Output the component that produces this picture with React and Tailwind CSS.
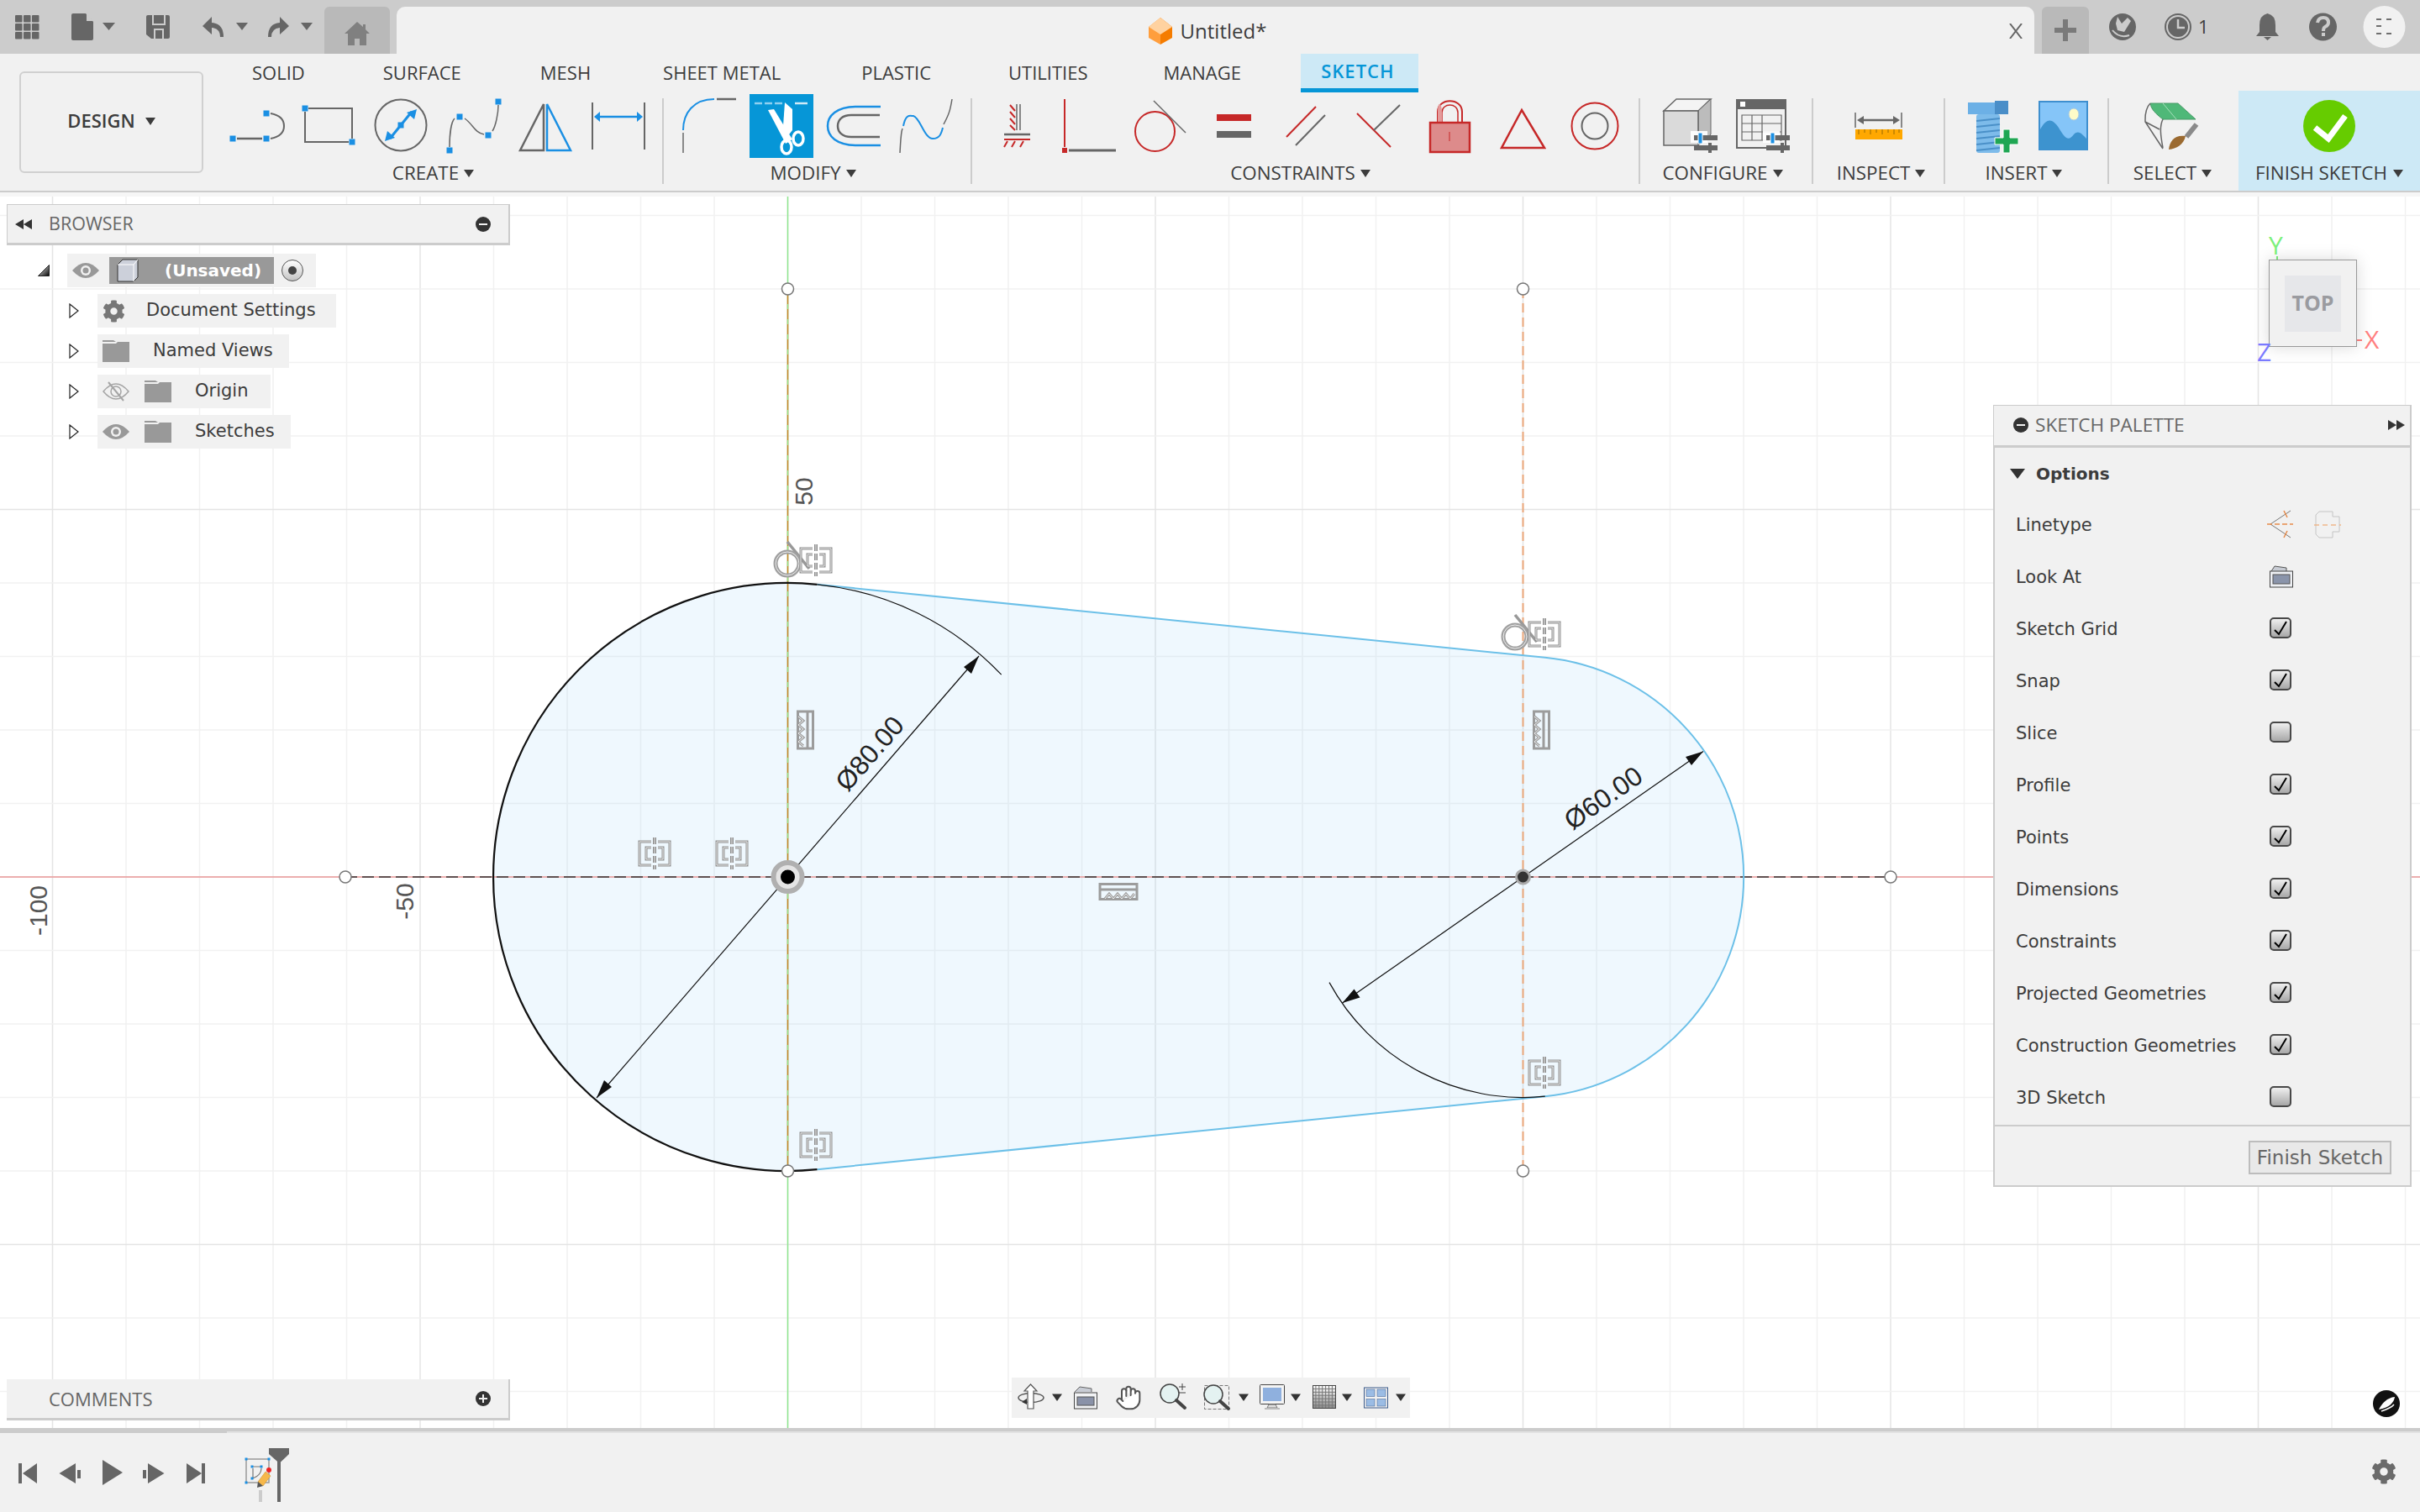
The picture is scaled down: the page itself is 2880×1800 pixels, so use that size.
import React from "react";
import { Hand } from "lucide-react";
import { FaCog } from "react-icons/fa";

const BLUE = "#1a8fe3", GR = "#666666", RED = "#c62828";

const Slot = ({ x, children }) => (
  <svg viewBox={`${x} 112 86 76`} width={86} height={76} className="shrink-0">{children}</svg>
);
const Ico = ({ x, y, w, h, className = "", children }) => (
  <svg viewBox={`${x} ${y} ${w} ${h}`} width={w} height={h} className={`shrink-0 ${className}`}>{children}</svg>
);
const Sq = ({ x, y }) => <rect x={x - 3.5} y={y - 3.5} width={7} height={7} fill={BLUE} />;

const Caret = ({ className = "" }) => (
  <svg width={12} height={10} viewBox="0 0 12 10" className={`shrink-0 ${className}`}><path d="M0 1H12L6 10Z" fill="#3c3c3c" /></svg>
);

const Group = ({ w, pl, label, shift, children }) => (
  <div className={`flex flex-col ${w}`}>
    <div className={`flex h-[76px] mt-[4px] ${pl}`}>{children}</div>
    <div className={`flex h-[36px] items-center justify-center gap-[6px] text-[22.4px] text-[#3c3c3c] ${shift}`}>
      <span>{label}</span><Caret />
    </div>
  </div>
);
const Sep = () => <div className="w-[2px] h-[102px] mt-[9px] bg-[#cccccc] shrink-0" />;

const Slider = ({ x }) => (
  <g>
    <rect x={x - 4} y={156} width={20} height={14} fill="#fff" opacity="0.9" />
    <rect x={x} y={161} width={28} height={6} fill={GR} />
    <rect x={x + 5} y={158} width={5} height={13} fill={BLUE} stroke="#fff" strokeWidth="1" />
    <rect x={x} y={173} width={28} height={6} fill={GR} />
    <rect x={x + 17} y={170} width={4} height={12} fill={GR} />
  </g>
);

const Tab = ({ children, m = "ml-[45px]" }) => (
  <div className={`flex h-[44px] items-center px-[23px] text-[#3c3c3c] ${m}`}>{children}</div>
);

function TopBar() {
  return (
    <div className="flex h-[64px] bg-[#cccccc] shrink-0">
      <Ico x={0} y={0} w={70} h={64}>
        {[18, 28, 38].map(x => [18, 28, 38].map(y => <rect key={`${x}${y}`} x={x} y={y} width={8.5} height={8.5} rx={1} fill={GR} />))}
      </Ico>
      <Ico x={70} y={0} w={80} h={64}>
        <path d="M87 16H102L111 26V46Q111 48 109 48H87Q85 48 85 46V18Q85 16 87 16Z" fill={GR} />
        <path d="M103 16L111 25H103Z" fill="#ccc" />
        <path d="M122 27H137L129.500 36Z" fill={GR} />
      </Ico>
      <Ico x={150} y={0} w={76} h={64}>
        <path d="M176 18H200Q202 18 202 20V44Q202 46 200 46H180L174 41V20Q174 18 176 18Z" fill={GR} />
        <path d="M182 18V29H196V18" fill="none" stroke="#ccc" strokeWidth="2" />
        <path d="M184 46V35H194V46" fill="none" stroke="#ccc" strokeWidth="2" />
      </Ico>
      <Ico x={226} y={0} w={78} h={64}>
        <path d="M241 31L252 20V27Q266 28 266 44H262Q262 34 252 33V41Z" fill={GR} />
        <path d="M281 27H295L288 36Z" fill={GR} />
      </Ico>
      <Ico x={304} y={0} w={82} h={64}>
        <path d="M344 31L333 20V27Q319 28 319 44H323Q323 34 333 33V41Z" fill={GR} />
        <path d="M358 27H372L365 36Z" fill={GR} />
      </Ico>
      <div className="flex w-[78px] h-[56px] mt-[8px] rounded-t-[6px] bg-[#b9b9b9] items-end justify-center shrink-0">
        <svg viewBox="0 0 30 28" width={30} height={28} className="mb-[10px]">
          <path d="M15 0L22 6V3H25V9L30 14H26V28H18V20H12V28H4V14H0Z" fill="#808080" />
        </svg>
      </div>
      <div className="relative flex h-[56px] mt-[8px] ml-[8px] w-[1949px] rounded-t-[10px] bg-[#f1f1f1] items-center justify-center pr-[20px] pt-[2px] shrink-0">
        <svg viewBox="0 0 30 34" width={30} height={34} className="mr-[9px]">
          <path d="M15 1L29 12V25L15 33Z" fill="#f57c00" />
          <path d="M15 1L1 12V25L15 33Z" fill="#ff9e3d" />
          <path d="M15 1L29 12L15 21L1 12Z" fill="#ffd2a0" />
        </svg>
        <span className="text-[24px] text-[#3c3c3c]">Untitled*</span>
        <svg viewBox="0 0 16 18" width={16} height={18} className="absolute right-[14px] top-[20px]">
          <path d="M1 0L15 18M15 0L1 18" stroke="#666" strokeWidth="2" />
        </svg>
      </div>
      <div className="flex w-[56px] h-[56px] mt-[8px] ml-[9px] rounded-t-[6px] bg-[#b9b9b9] items-center justify-center shrink-0">
        <svg width={26} height={26} viewBox="0 0 26 26"><path d="M10 0H16V10H26V16H16V26H10V16H0V10H10Z" fill="#7a7a7a" /></svg>
      </div>
      <Ico x={2486} y={0} w={74} h={64}>
        <circle cx={2526} cy={32} r={16} fill={GR} />
        <path d="M2520 20L2525 28L2532 21L2536 25L2528 38L2520 36L2518 28Z" fill="#ccc" />
        <path d="M2514 36Q2522 46 2534 42" stroke="#ccc" strokeWidth="2" fill="none" />
      </Ico>
      <Ico x={2560} y={0} w={90} h={64}>
        <circle cx={2592} cy={32} r={15} fill="none" stroke={GR} strokeWidth="2" />
        <circle cx={2592} cy={32} r={12} fill={GR} />
        <path d="M2592 23V33H2600" stroke="#ccc" strokeWidth="2.500" fill="none" />
        <text x={2616} y={40} fontSize={22} fill="#3c3c3c" fontFamily="Open Sans, sans-serif">1</text>
      </Ico>
      <Ico x={2650} y={0} w={80} h={64}>
        <path d="M2698.500 16Q2708 18 2708 30V38L2712 43H2685L2689 38V30Q2689 18 2698.500 16Z" fill={GR} />
        <path d="M2694 44H2703L2698.500 48Z" fill={GR} />
      </Ico>
      <Ico x={2730} y={0} w={70} h={64}>
        <circle cx={2764.500} cy={32} r={16.500} fill={GR} />
        <path d="M2758 27Q2759 21 2765 21Q2771 21 2771 27Q2771 30 2767 32Q2765 33 2765 37" stroke="#ccc" strokeWidth="4" fill="none" />
        <rect x={2763} y={39} width={4} height={4} fill="#ccc" />
      </Ico>
      <Ico x={2800} y={0} w={80} h={64}>
        <circle cx={2837.500} cy={32} r={25} fill="#f1f1f1" />
        <path d="M2828 23H2834M2840 23H2846M2828 31H2834M2828 40H2834M2840 40H2846" stroke="#444" strokeWidth="1.500" />
      </Ico>
    </div>
  );
}

function Ribbon() {
  return (
    <div className="flex h-[165px] bg-[#f1f1f1] border-b-[2px] border-[#cccccc] shrink-0">
      <div className="w-[253px] shrink-0 pl-[23px] pt-[21px]">
        <div className="flex w-[219px] h-[121px] pb-[4px] rounded-[6px] border-2 border-[#d0d0d0] items-center justify-center gap-[12px] text-[22px] font-semibold text-[#3c3c3c]">
          <span>DESIGN</span><Caret />
        </div>
      </div>
      <div className="flex flex-col flex-1">
        <div className="flex h-[44px] pl-[24px] text-[22px]">
          <Tab m="ml-0">SOLID</Tab>
          <Tab m="ml-[47px]">SURFACE</Tab>
          <Tab m="ml-[48px]">MESH</Tab>
          <Tab m="ml-[40px]">SHEET METAL</Tab>
          <Tab m="ml-[50px]">PLASTIC</Tab>
          <Tab m="ml-[46px]">UTILITIES</Tab>
          <Tab m="ml-[44px]">MANAGE</Tab>
          <div className="flex h-[46px] w-[140px] items-center justify-center pr-[4px] ml-[48px] bg-[#cde9f6] border-b-[5px] border-[#0696d7] text-[#0696d7] font-semibold tracking-[1px]">SKETCH</div>
        </div>
        <div className="flex flex-1">
          <Group w="w-[535px]" pl="pl-[10px]" label="CREATE" shift="pr-[10px]">
            <Slot x={263}>
              <path d="M282 165H312" stroke={GR} strokeWidth="2.500" />
              <path d="M322 135Q338 138 338 150Q338 162 322 165" stroke={GR} strokeWidth="2" fill="none" />
              <Sq x={277} y={165} /><Sq x={317} y={165} /><Sq x={317} y={135} />
            </Slot>
            <Slot x={349}>
              <path d="M367 129H419V165M415 169H363V133" stroke={GR} strokeWidth="2" fill="none" />
              <Sq x={363} y={129} /><Sq x={419} y={169} />
            </Slot>
            <Slot x={435}>
              <circle cx={477} cy={149} r={30.500} fill="none" stroke={GR} strokeWidth="2" />
              <path d="M464 165L490 133" stroke={BLUE} strokeWidth="3" />
              <path d="M496 130L484 134L493 142Z" fill={BLUE} /><path d="M458 168L470 164L461 156Z" fill={BLUE} />
              <Sq x={477} y={149} />
            </Slot>
            <Slot x={521}>
              <path d="M535 175C535 160 537 145 541 141M553 141C563 148 565 158 576 160M586 156C590 150 593 135 593 125" stroke={GR} strokeWidth="1.500" fill="none" />
              <Sq x={535} y={179} /><Sq x={547} y={139} /><Sq x={581} y={161} /><Sq x={593} y={121} />
            </Slot>
            <Slot x={607}>
              <path d="M619 179L647 124V179Z" stroke={GR} strokeWidth="2.500" fill="none" />
              <path d="M651 179V124L679 179Z" stroke={BLUE} strokeWidth="2.500" fill="none" />
            </Slot>
            <Slot x={693}>
              <path d="M705 122V178M767 122V178" stroke={GR} strokeWidth="2" />
              <path d="M712 139H760" stroke={BLUE} strokeWidth="2.500" />
              <path d="M707 139L714 133V145Z M765 139L758 133V145Z" fill={BLUE} />
            </Slot>
          </Group>
          <Sep />
          <Group w="w-[365px]" pl="pl-[11px]" label="MODIFY" shift="pr-[10px]">
            <Slot x={801}>
              <path d="M813 155C813 135 825 118 850 118" stroke={BLUE} strokeWidth="2" fill="none" />
              <path d="M853 118H876" stroke={GR} strokeWidth="2.500" />
              <path d="M813 158V182" stroke={GR} strokeWidth="1.500" />
            </Slot>
            <Slot x={887}>
              <rect x={892} y={112} width={76} height={76} fill="#0696d7" />
              <path d="M898 123H931" stroke="#8fd0f0" strokeWidth="2.500" strokeDasharray="9 3" />
              <path d="M946 123H961" stroke="#cfeaf7" strokeWidth="2.500" />
              <path d="M914 131L921 130L943 166L935 171Z" fill="#fff" />
              <path d="M934 122L943 130V155L936 164L932 150Z" fill="#fff" />
              <ellipse cx={936} cy={175} rx={6} ry={8} fill="none" stroke="#fff" strokeWidth="3.500" />
              <ellipse cx={950} cy={165} rx={6} ry={8} fill="none" stroke="#fff" strokeWidth="3.500" />
            </Slot>
            <Slot x={973}>
              <path d="M1048 127H1020C995 127 985 138 985 150C985 162 995 173 1020 173H1048" stroke={BLUE} strokeWidth="2.500" fill="none" />
              <path d="M1047 137H1013C1002 137 997 143 997 150C997 157 1002 163 1013 163H1047" stroke={GR} strokeWidth="2.500" fill="none" />
            </Slot>
            <Slot x={1059}>
              <path d="M1071 182C1072 165 1072 158 1074 153M1123 148C1130 135 1131 130 1133 118" stroke={GR} strokeWidth="1.500" fill="none" />
              <path d="M1075 150C1078 135 1083 138 1087 138C1095 140 1100 165 1110 165C1118 165 1120 160 1122 152" stroke={BLUE} strokeWidth="2" fill="none" />
            </Slot>
          </Group>
          <Sep />
          <Group w="w-[793px]" pl="pl-[10px]" label="CONSTRAINTS" shift="pr-[12px]">
            <Slot x={1167}>
              <path d="M1210 124V155M1214 124V155" stroke={GR} strokeWidth="1.500" />
              <path d="M1202 125L1208 132M1202 133L1208 140M1202 141L1208 148M1202 149L1208 155" stroke={RED} strokeWidth="2" />
              <path d="M1195 160H1226" stroke={GR} strokeWidth="2.500" />
              <path d="M1195 166H1226" stroke={RED} strokeWidth="2" />
              <path d="M1199 168L1195 175M1208 168L1204 175M1218 168L1214 175" stroke={RED} strokeWidth="2" />
            </Slot>
            <Slot x={1253}>
              <path d="M1267 118V175" stroke={RED} strokeWidth="2" />
              <rect x={1264} y={176} width={6} height={6} fill={RED} />
              <path d="M1272 179H1328" stroke={GR} strokeWidth="3" />
            </Slot>
            <Slot x={1339}>
              <circle cx={1374.500} cy={156.500} r={23.500} fill="none" stroke={RED} strokeWidth="2" />
              <path d="M1373 120L1411 158" stroke={GR} strokeWidth="1.500" />
            </Slot>
            <Slot x={1425}>
              <rect x={1448} y={136} width={41} height={8} fill={RED} />
              <rect x={1448} y={156} width={41} height={8} fill={GR} />
            </Slot>
            <Slot x={1511}>
              <path d="M1531 163L1566 127" stroke={RED} strokeWidth="2" />
              <path d="M1542 173L1577 137" stroke={GR} strokeWidth="2" />
            </Slot>
            <Slot x={1597}>
              <path d="M1615 135L1655 175" stroke={RED} strokeWidth="2" />
              <path d="M1666 125L1635 155" stroke={GR} strokeWidth="2" />
            </Slot>
            <Slot x={1683}>
              <path d="M1711 145V133C1711 116 1740 116 1740 133V145" stroke={RED} strokeWidth="2" fill="none" />
              <path d="M1716 145V134C1716 122 1735 122 1735 134V145" stroke={RED} strokeWidth="1.500" fill="none" />
              <path d="M1711 145V133C1711 119 1716 122 1716 134V145" fill="#e49a9a" />
              <rect x={1702} y={146} width={47} height={35} fill="#dd8b8b" stroke={RED} strokeWidth="2.500" />
              <path d="M1725 157V168" stroke={RED} strokeWidth="1" />
            </Slot>
            <Slot x={1769}>
              <path d="M1811 131L1787 176H1838Z" fill="none" stroke={RED} strokeWidth="2.500" />
            </Slot>
            <Slot x={1855}>
              <circle cx={1898} cy={150} r={27.500} fill="none" stroke={RED} strokeWidth="2" />
              <circle cx={1898} cy={150} r={15.500} fill="none" stroke={GR} strokeWidth="2" />
            </Slot>
          </Group>
          <Sep />
          <Group w="w-[204px]" pl="pl-[13px]" label="CONFIGURE" shift="pr-[8px]">
            <Slot x={1965}>
              <path d="M1980 132L1995 118H2036L2021 132Z" fill="#f4f4f4" stroke={GR} strokeWidth="1.500" />
              <path d="M2021 132L2036 118V160L2021 173Z" fill="#bcbcbc" stroke={GR} strokeWidth="1" />
              <path d="M1980 132H2021V173H1980Z" fill="#dadada" stroke={GR} strokeWidth="1.500" />
              <Slider x={2016} />
            </Slot>
            <Slot x={2051}>
              <rect x={2067} y={119} width={58} height={57} fill="none" stroke={GR} strokeWidth="2" />
              <rect x={2066} y={118} width={60} height={12} fill={GR} />
              <rect x={2071} y={121} width={6} height={6} fill="#fff" />
              <path d="M2073 137H2120V167H2073ZM2073 147H2120M2073 157H2120M2085 137V167M2097 137V167" fill="none" stroke={GR} strokeWidth="1.200" />
              <Slider x={2102} />
            </Slot>
          </Group>
          <Sep />
          <Group w="w-[155px]" pl="pl-[35px]" label="INSPECT" shift="pl-[6px]">
            <Slot x={2193}>
              <path d="M2208 134V152M2263 134V152" stroke={GR} strokeWidth="1.500" />
              <path d="M2214 143H2257" stroke={GR} strokeWidth="2.500" />
              <path d="M2210 143L2218 138V148ZM2261 143L2253 138V148Z" fill={GR} />
              <rect x={2208} y={154} width={56} height={12} fill="#ffa800" />
              <path d="M2212 154V160M2219 154V158M2226 154V160M2233 154V158M2240 154V160M2247 154V158M2254 154V160M2260 154V158" stroke="#9a6a00" strokeWidth="1" />
            </Slot>
          </Group>
          <Sep />
          <Group w="w-[193px]" pl="pl-[14px]" label="INSERT" shift="pr-[6px]">
            <Slot x={2329}>
              <path d="M2342 122H2390V136H2342Z" fill="#6cb0e6" />
              <path d="M2374 120H2390V136H2374Z" fill="#4a8ec8" />
              <rect x={2352} y={136} width={28} height={46} rx={3} fill="#7dbbea" />
              <path d="M2352 144L2380 141M2352 151L2380 148M2352 158L2380 155M2352 165L2380 162M2352 172L2380 169M2352 179L2380 176" stroke="#4a90c8" strokeWidth="2" />
              <path d="M2384 154H2392V164H2402V172H2392V182H2384V172H2374V164H2384Z" fill="#1fa653" stroke="#fff" strokeWidth="1" />
            </Slot>
            <Slot x={2415}>
              <rect x={2427} y={121} width={57} height={57} fill="#85c5f8" stroke="#3e8fcf" strokeWidth="2" />
              <ellipse cx={2468} cy={136} rx={6} ry={7} fill="#fdfbc8" stroke="#a8c8e0" strokeWidth="1" />
              <path d="M2427 178V156C2435 140 2442 140 2450 152C2458 166 2462 168 2468 160C2474 154 2478 160 2484 166V178Z" fill="#3d93cf" />
            </Slot>
          </Group>
          <Sep />
          <Group w="w-[154px]" pl="pl-[31px]" label="SELECT" shift="pr-[3px]">
            <Slot x={2541}>
              <path d="M2559 123H2592L2613 142H2574C2565 135 2560 130 2559 123Z" fill="#4fb878" stroke="#4a9a68" strokeWidth="1" />
              <path d="M2574 123L2590 142" stroke="#a8e0bc" strokeWidth="1" />
              <path d="M2559 123C2552 130 2553 140 2553 145L2574 177M2574 142C2570 150 2571 160 2574 176M2553 145L2570 154" stroke={GR} strokeWidth="1.500" fill="none" />
              <path d="M2614 148L2602 163" stroke="#8a8a8a" strokeWidth="6" />
              <path d="M2581 178C2582 168 2588 160 2601 162C2599 172 2590 177 2581 178Z" fill="#9b6a30" />
            </Slot>
          </Group>
          <div className="flex flex-col w-[216px] bg-[#cde9f6]">
            <div className="flex h-[76px] mt-[4px] pl-[65px]">
              <Slot x={2729}>
                <circle cx={2772} cy={150} r={31} fill="#66cc00" />
                <path d="M2755 152L2771 165L2791 138" fill="none" stroke="#fff" strokeWidth="7" />
              </Slot>
            </div>
            <div className="flex h-[36px] items-center justify-center gap-[7px] text-[22.4px] text-[#3c3c3c]">
              <span>FINISH SKETCH</span><Caret />
            </div>
          </div>
        </div>
      </div>
    </div>
  );
}

const Mid = ({ x, y }) => {
  const d = "M-4 -14H-18V14H-4M4 -14H18V14H4M-4 -7H-10V7H-4M4 -7H10V7H4";
  return (
    <g transform={`translate(${x} ${y})`} fill="none">
      <g stroke="#8f8f8f" strokeWidth="3">
        <path d={d} />
        <path d="M0 -19V19" strokeDasharray="8 3" strokeWidth="4" />
      </g>
      <g stroke="#e8e8e8" strokeWidth="1">
        <path d={d} />
        <path d="M0 -19V19" strokeDasharray="8 3" />
      </g>
    </g>
  );
};
const Tan = ({ x, y }) => (
  <g fill="none">
    <path d={`M${x} ${y - 26}L${x + 26} ${y + 6}`} stroke="#999" strokeWidth="3.500" />
    <circle cx={x} cy={y} r={14} stroke="#a0a0a0" strokeWidth="5" />
    <circle cx={x} cy={y} r={14} stroke="#eee" strokeWidth="1" />
  </g>
);
const FixV = ({ x, y }) => (
  <g transform={`translate(${x} ${y})`} fill="none">
    <g stroke="#9c9c9c" strokeWidth="3">
      <rect x={-8.500} y={-22} width={18} height={44} />
      <path d="M3 -22V22" />
      <path d="M-8 -16L-2 -11L-8 -6L-2 -1L-8 4L-2 9L-8 14L-2 19" />
    </g>
    <path d="M-8 -16L-2 -11L-8 -6L-2 -1L-8 4L-2 9L-8 14L-2 19" stroke="#eee" strokeWidth="1" />
  </g>
);
const Pt = ({ x, y }) => <circle cx={x} cy={y} r={7} fill="#fff" stroke="#777" strokeWidth="1.500" />;

function Drawing() {
  const minorX = [], minorY = [];
  for (let k = -11; k <= 23; k++) minorX.push(937.5 + 87.5 * k);
  for (let k = -10; k <= 8; k++) minorY.push(1044 + 87.5 * k);
  return (
    <svg viewBox="0 229 2880 1471" width={2880} height={1471} className="absolute inset-0">
      {minorX.map((x, i) => (
        <path key={x} d={`M${x} 234V1700`} stroke={(i - 1) % 5 === 0 ? "#e4e4e4" : "#f1f1f1"} strokeWidth="1.500" />
      ))}
      {minorY.map((y, i) => (
        <path key={y} d={`M0 ${y}H2880`} stroke={i % 5 === 0 ? "#e4e4e4" : "#f1f1f1"} strokeWidth="1.500" />
      ))}
      <rect x={0} y={229} width={2880} height={5} fill="#f6f6f6" />
      <path d="M972.500 695.800L1838.750 782.800A262.500 262.500 0 0 1 1838.750 1305.200L972.500 1392.200A350 350 0 1 1 972.500 695.800Z" fill="#8fd0f7" fillOpacity="0.14" />
      <path d="M0 1044H2880" stroke="#ec9a9a" strokeWidth="1.500" />
      <path d="M937.500 234V1700" stroke="#8ee68e" strokeWidth="1.500" />
      <path d="M937.500 344V1394" stroke="#c9832a" strokeWidth="1.500" />
      <path d="M937.500 344V1394" stroke="#8ee68e" strokeWidth="1" strokeDasharray="6 12" />
      <path d="M1812.500 344V1394" stroke="#eba77a" strokeWidth="2" strokeDasharray="11 6" />
      <path d="M411 1044H2250" stroke="#333" strokeWidth="1.500" strokeDasharray="14 6" />

      <path d="M972.500 695.800L1838.750 782.800A262.500 262.500 0 0 1 1838.750 1305.200L972.500 1392.200" fill="none" stroke="#6cc0e8" strokeWidth="2" />
      <path d="M972.500 1392.200A350 350 0 1 1 972.500 695.800" fill="none" stroke="#111" strokeWidth="2.200" />
      <path d="M972.500 695.800A350 350 0 0 1 1191.700 803.200" fill="none" stroke="#111" strokeWidth="1.200" />
      <path d="M1582 1169.600A262.500 262.500 0 0 0 1838.750 1305.200" fill="none" stroke="#111" strokeWidth="1.200" />

      <path d="M1165 781L710 1307" stroke="#111" strokeWidth="1.200" />
      <path d="M1165 781L1147 794L1156 802Z M710 1307L728 1294L719 1286Z" fill="#111" />
      <path d="M2027 894.600L1597.500 1194" stroke="#111" strokeWidth="1.200" />
      <path d="M2027 894.600L2006 901L2013 911Z M1597.500 1194L1618.500 1187.600L1611.500 1177.600Z" fill="#111" />
      <text x={1035} y={908} transform="rotate(-49 1035 897)" fontSize={32} textAnchor="middle" fill="#222" fontFamily="Liberation Sans, sans-serif">Ø80.00</text>
      <text x={1908} y={961} transform="rotate(-35 1908 950)" fontSize={32} textAnchor="middle" fill="#222" fontFamily="Liberation Sans, sans-serif">Ø60.00</text>
      <text x={967} y={585} transform="rotate(-90 967 585)" fontSize={30} textAnchor="middle" fill="#555" fontFamily="Liberation Sans, sans-serif">50</text>
      <text x={492} y={1073} transform="rotate(-90 492 1073)" fontSize={30} textAnchor="middle" fill="#555" fontFamily="Liberation Sans, sans-serif">-50</text>
      <text x={56} y={1084} transform="rotate(-90 56 1084)" fontSize={30} textAnchor="middle" fill="#555" fontFamily="Liberation Sans, sans-serif">-100</text>

      <Pt x={411} y={1044} /><Pt x={2250} y={1044} /><Pt x={937.5} y={344} /><Pt x={1812.5} y={344} /><Pt x={937.5} y={1394} /><Pt x={1812.5} y={1394} />
      <circle cx={937.5} cy={1044} r={17} fill="#e4e4e4" stroke="#b0b0b0" strokeWidth="6" />
      <circle cx={937.5} cy={1044} r={8.500} fill="#000" />
      <circle cx={1812.5} cy={1044} r={8} fill="#333" stroke="#aaa" strokeWidth="3" />

      <Mid x={779} y={1016} /><Mid x={871} y={1016} />
      <Tan x={937} y={671} /><Tan x={1803} y={758} />
      <Mid x={971} y={667} /><Mid x={1838} y={755} /><Mid x={1838} y={1277} /><Mid x={971} y={1363} />
      <FixV x={958} y={869} /><FixV x={1834} y={869} />
      <g transform="rotate(-90 1331 1062)"><FixV x={1331} y={1062} /></g>

      <circle cx={2840} cy={1671} r={16} fill="#111" />
      <path d="M2831 1678C2835 1670 2841 1664 2850 1663C2849 1670 2843 1676 2831 1678Z" fill="#fff" />
      <path d="M2834 1680C2840 1678 2846 1676 2849 1672" stroke="#fff" strokeWidth="1.500" fill="none" />
    </svg>
  );
}

const Eye = ({ off }) => (
  <svg viewBox="0 0 32 24" width={32} height={24} className="shrink-0">
    {off ? (
      <g fill="none" stroke="#a5a5a5" strokeWidth="1.500">
        <path d="M1 12Q16 -6 31 12Q16 30 1 12Z" /><circle cx={16} cy={12} r={6} /><path d="M7 1L25 23" strokeWidth="2" />
      </g>
    ) : (
      <g>
        <path d="M0 12Q16 -6 32 12Q16 30 0 12Z" fill="#999" />
        <circle cx={16} cy={12} r={6} fill="#f1f1f1" /><circle cx={16} cy={12} r={3.500} fill="#999" />
      </g>
    )}
  </svg>
);
const Folder = ({ className = "" }) => (
  <svg viewBox="0 0 32 26" width={32} height={26} className={`shrink-0 ${className}`}>
    <path d="M0 0H13L16 2H0Z M0 4H16L18 2H32V26H0Z" fill="#999" />
  </svg>
);
const Tri = () => (
  <svg viewBox="0 0 12 18" width={12} height={18} className="shrink-0">
    <path d="M1 1L11 9L1 17Z" fill="#fff" stroke="#222" strokeWidth="1.200" />
  </svg>
);

function BrowserPanel() {
  const label = "text-[21px] text-[#3c3c3c] font-['DejaVu_Sans',sans-serif]";
  return (
    <div className="absolute left-[8px] top-[14px] w-[599px]">
      <div className="flex h-[49px] items-center bg-[#f1f1f1] border border-[#cccccc] border-b-[3px] border-r-[2px]">
        <svg viewBox="0 0 20 12" width={20} height={12} className="ml-[9px]"><path d="M0 6L10 0V12ZM10 6L20 0V12Z" fill="#333" /></svg>
        <span className="ml-[20px] text-[21.5px] text-[#666666]">BROWSER</span>
        <div className="relative ml-auto mr-[21px] w-[18px] h-[18px] rounded-full bg-[#333]">
          <div className="absolute left-[4px] top-[8px] w-[10px] h-[2px] bg-[#f1f1f1]" />
        </div>
      </div>
      <div className="flex flex-col gap-[8px] mt-[10px]">
        <div className="flex items-center h-[40px] pl-[37px]">
          <svg viewBox="0 0 14 14" width={14} height={14} className="shrink-0">
            <defs><linearGradient id="tg" x1="0" x2="1" y1="0" y2="1"><stop offset="0" stopColor="#fff" /><stop offset="1" stopColor="#000" /></linearGradient></defs>
            <path d="M0.500 13.500L13.500 0.500V13.500Z" fill="url(#tg)" stroke="#222" />
          </svg>
          <div className="flex items-center w-[296px] h-[40px] ml-[21px] pl-[6px] bg-[#f1f1f1]">
            <Eye />
            <div className="flex items-center w-[196px] h-[32px] ml-[12px] pl-[9px] bg-[#999999]">
              <svg viewBox="0 0 26 28" width={26} height={28} className="shrink-0">
                <path d="M1 7L7 1H25V22L20 27H1Z" fill="#ccd0da" stroke="#333" />
                <path d="M1 7H20V27M20 7L25 1" fill="none" stroke="#fff" />
              </svg>
              <span className="ml-[31px] text-[20px] font-bold text-white font-['DejaVu_Sans',sans-serif] whitespace-nowrap">(Unsaved)</span>
            </div>
            <div className="flex items-center justify-center w-[26px] h-[26px] ml-[9px] rounded-full border border-[#555] bg-linear-to-b from-[#ffffff] to-[#c4c4c4]">
              <div className="w-[10px] h-[10px] rounded-full bg-[#444]" />
            </div>
          </div>
        </div>
        <div className="flex items-center h-[40px] pl-[74px]">
          <Tri />
          <div className="flex items-center w-[284px] h-[40px] ml-[22px] pl-[6px] bg-[#f1f1f1]">
            <FaCog size={27} color="#777" className="shrink-0" />
            <span className={`ml-[25px] ${label}`}>Document Settings</span>
          </div>
        </div>
        <div className="flex items-center h-[40px] pl-[74px]">
          <Tri />
          <div className="flex items-center w-[228px] h-[40px] ml-[22px] pl-[6px] bg-[#f1f1f1]">
            <Folder />
            <span className={`ml-[28px] ${label}`}>Named Views</span>
          </div>
        </div>
        <div className="flex items-center h-[40px] pl-[74px]">
          <Tri />
          <div className="flex items-center w-[206px] h-[40px] ml-[22px] pl-[6px] bg-[#f1f1f1]">
            <Eye off /><Folder className="ml-[18px]" />
            <span className={`ml-[28px] ${label}`}>Origin</span>
          </div>
        </div>
        <div className="flex items-center h-[40px] pl-[74px]">
          <Tri />
          <div className="flex items-center w-[230px] h-[40px] ml-[22px] pl-[6px] bg-[#f1f1f1]">
            <Eye /><Folder className="ml-[18px]" />
            <span className={`ml-[28px] ${label}`}>Sketches</span>
          </div>
        </div>
      </div>
    </div>
  );
}

const Check = ({ on }) => (
  <div className="relative w-[26px] h-[25px] -mt-[6px] rounded-[5px] border-2 border-[#484848] bg-linear-to-b from-[#f0f0f0] to-[#a8a8a8]">
    {on && (
      <svg viewBox="0 0 22 21" width={22} height={21} className="absolute inset-0">
        <path d="M4 13L9 18L18 3" fill="none" stroke="#000" strokeWidth="2" />
      </svg>
    )}
  </div>
);
const PRow = ({ label, children }) => (
  <div className="flex h-[62px] items-center">
    <span className="w-[327px] pl-[25px] text-[21px] text-[#3c3c3c] font-['DejaVu_Sans',sans-serif] whitespace-nowrap">{label}</span>
    {children}
  </div>
);

function Palette() {
  return (
    <div className="absolute left-[2372px] top-[253px] w-[498px]">
      <div className="flex h-[51px] pb-[2px] items-center bg-[#f1f1f1] border border-[#cccccc] border-b-[3px] border-r-[2px]">
        <div className="relative ml-[23px] w-[18px] h-[18px] rounded-full bg-[#333]">
          <div className="absolute left-[4px] top-[8px] w-[10px] h-[2px] bg-[#f1f1f1]" />
        </div>
        <span className="ml-[8px] text-[22.6px] text-[#666666]">SKETCH PALETTE</span>
        <svg viewBox="0 0 20 12" width={20} height={12} className="ml-auto mr-[6px]"><path d="M20 6L10 0V12ZM10 6L0 0V12Z" fill="#333" /></svg>
      </div>
      <div className="bg-[#f1f1f1] border-x-2 border-[#cccccc]">
        <div className="flex h-[62px] items-center">
          <svg viewBox="0 0 18 12" width={18} height={12} className="ml-[18px]"><path d="M0 0H18L9 12Z" fill="#333" /></svg>
          <span className="ml-[13px] text-[20px] font-bold text-[#3c3c3c] font-['DejaVu_Sans',sans-serif]">Options</span>
        </div>
        <PRow label="Linetype">
          <svg viewBox="2696 606 92 36" width={92} height={36} className="-ml-[5px] -mt-[4px]">
            <path d="M2726 608L2702 624L2726 640" fill="none" stroke="#777" strokeWidth="1" />
            <path d="M2698 624H2729" stroke="#e68a4a" strokeWidth="1.500" strokeDasharray="6 3" />
            <path d="M2718 608L2722 616M2722 632L2718 640" stroke="#e68a4a" strokeWidth="1.500" />
            <path d="M2760 609H2776V615H2784V633H2776V640H2760L2756 636V613Z" fill="none" stroke="#c4c4c4" strokeWidth="1" />
            <path d="M2754 625H2786" stroke="#f0b68a" strokeWidth="1.500" strokeDasharray="6 4" />
          </svg>
        </PRow>
        <PRow label="Look At">
          <svg viewBox="0 0 28 28" width={28} height={28} className="-mt-[4px]">
            <path d="M2 8L6 2L20 4V8" fill="#c8ccd4" stroke="#555" />
            <rect x={0.500} y={8} width={27} height={19} fill="#eef0f4" stroke="#444" />
            <rect x={4} y={12} width={20} height={11} fill="#8a94aa" stroke="#555" />
          </svg>
        </PRow>
        <PRow label="Sketch Grid"><Check on /></PRow>
        <PRow label="Snap"><Check on /></PRow>
        <PRow label="Slice"><Check /></PRow>
        <PRow label="Profile"><Check on /></PRow>
        <PRow label="Points"><Check on /></PRow>
        <PRow label="Dimensions"><Check on /></PRow>
        <PRow label="Constraints"><Check on /></PRow>
        <PRow label="Projected Geometries"><Check on /></PRow>
        <PRow label="Construction Geometries"><Check on /></PRow>
        <PRow label="3D Sketch"><Check /></PRow>
      </div>
      <div className="flex h-[74px] pt-[4px] items-center justify-end pr-[22px] bg-[#f1f1f1] border-2 border-[#cccccc]">
        <div className="flex w-[170px] h-[40px] items-center justify-center bg-[#e9e9e9] border-2 border-[#bdbdbd] text-[23px] text-[#666666] font-['DejaVu_Sans',sans-serif] whitespace-nowrap">Finish Sketch</div>
      </div>
    </div>
  );
}

function ViewCube() {
  return (
    <div className="absolute left-[2685px] top-[50px] w-[155px] h-[150px]">
      <div className="absolute left-[24px] top-[26px] w-[2px] h-[6px] bg-[#7cf07c]" />
      <div className="absolute left-[120px] top-[125px] w-[6px] h-[2px] bg-[#ff7f7f]" />
      <div className="absolute left-[15px] top-[30px] flex w-[105px] h-[104px] items-center justify-center bg-[#f1f1f1] border border-[#999999] shadow-[0_0_18px_rgba(0,0,0,0.15)]">
        <div className="flex w-[67px] h-[67px] items-center justify-center bg-[#e6e7ea] text-[25px] font-bold text-[#9a9ba0]">TOP</div>
      </div>
      <span className="absolute left-[15px] top-[-2px] text-[30px] leading-[30px] text-[#7cf07c]">Y</span>
      <span className="absolute left-[129px] top-[110px] text-[30px] leading-[30px] text-[#ff7f7f]">X</span>
      <span className="absolute left-[1px] top-[125px] text-[30px] leading-[30px] text-[#7a7aff]">Z</span>
    </div>
  );
}

function Comments() {
  return (
    <div className="absolute left-[8px] top-[1413px] flex w-[599px] h-[49px] items-center bg-[#f1f1f1] border-b-[3px] border-r-[2px] border-[#cccccc]">
      <span className="ml-[50px] text-[22px] text-[#666666]">COMMENTS</span>
      <div className="relative ml-auto mr-[21px] w-[18px] h-[18px] rounded-full bg-[#333]">
        <div className="absolute left-[4px] top-[8px] w-[10px] h-[2px] bg-[#f1f1f1]" />
        <div className="absolute left-[8px] top-[4px] w-[2px] h-[10px] bg-[#f1f1f1]" />
      </div>
    </div>
  );
}

const NArrow = ({ x, w }) => (
  <Ico x={x} y={1640} w={w} h={48}><path d={`M${x + w / 2 - 6} 1659.500H${x + w / 2 + 6}L${x + w / 2} 1668Z`} fill="#333" /></Ico>
);

function NavBar() {
  const lines = [];
  for (let i = 1; i < 7; i++) {
    lines.push(`M${1562 + i * 3.9} 1650V1676`);
    lines.push(`M1563 ${1649.5 + i * 3.9}H1589`);
  }
  return (
    <div className="absolute left-[1204px] top-[1411px] flex w-[474px] h-[48px] bg-[#f1f1f1]">
      <Ico x={1204} y={1640} w={42} h={48}>
        <ellipse cx={1227} cy={1664} rx={15} ry={5.500} fill="none" stroke="#555" strokeWidth="1.500" />
        <path d="M1226.500 1648L1234 1656H1230V1677H1223V1656H1219Z" fill="#fff" stroke="#555" strokeWidth="1.200" />
        <path d="M1216 1669L1222 1665V1672Z" fill="#333" />
      </Ico>
      <NArrow x={1246} w={24} />
      <Ico x={1270} y={1640} w={46} h={48}>
        <path d="M1279 1657L1285 1651L1299 1653V1657" fill="#c8ccd4" stroke="#666" />
        <rect x={1278.500} y={1658} width={27} height={19} fill="#f1f2f4" stroke="#444" />
        <rect x={1282} y={1663} width={20} height={10} fill="#8a92a8" stroke="#555" />
      </Ico>
      <div className="flex w-[54px] items-center justify-center">
        <Hand size={32} strokeWidth={1.500} color="#555" fill="#fff" />
      </div>
      <Ico x={1370} y={1640} w={54} h={48}>
        <circle cx={1392} cy={1659} r={11} fill="#e4f2f1" stroke="#444" strokeWidth="1.500" />
        <path d="M1400 1667L1410 1676" stroke="#444" strokeWidth="4" strokeLinecap="round" />
        <path d="M1403 1651H1411M1407 1647V1655M1403 1658H1411" stroke="#444" strokeWidth="1" />
      </Ico>
      <Ico x={1424} y={1640} w={44} h={48}>
        <rect x={1433.500} y={1649.500} width={29} height={28} fill="none" stroke="#777" strokeWidth="1" strokeDasharray="4 2" />
        <circle cx={1444} cy={1660} r={11} fill="#e4f2f1" stroke="#444" strokeWidth="1.500" />
        <path d="M1452 1668L1462 1677" stroke="#444" strokeWidth="4" strokeLinecap="round" />
      </Ico>
      <NArrow x={1468} w={24} />
      <Ico x={1492} y={1640} w={40} h={48}>
        <rect x={1499.500} y={1648.500} width={29} height={23} rx={1} fill="#f4f4f4" stroke="#444" />
        <rect x={1503} y={1652} width={22} height={16} fill="#8fb0de" />
        <path d="M1510 1672H1518L1520 1676H1508Z" fill="#ddd" stroke="#777" />
        <rect x={1505} y={1676} width={18} height={2} fill="#bbb" />
      </Ico>
      <NArrow x={1532} w={20} />
      <Ico x={1552} y={1640} w={42} h={48}>
        <defs><linearGradient id="gg" x1="0" x2="0" y1="0" y2="1"><stop offset="0" stopColor="#fff" /><stop offset="1" stopColor="#8a8a8a" /></linearGradient></defs>
        <rect x={1562.500} y={1649.500} width={27} height={27} fill="url(#gg)" />
        <path d={lines.join("")} stroke="#777" strokeWidth="1" />
        <rect x={1562.500} y={1649.500} width={27} height={27} fill="none" stroke="#444" />
      </Ico>
      <NArrow x={1594} w={18} />
      <Ico x={1612} y={1640} w={44} h={48}>
        <rect x={1623.500} y={1652} width={28} height={24} fill="#f1f1f1" stroke="#3a5a8a" strokeWidth="1" />
        <rect x={1626} y={1654} width={10} height={8.500} fill="#9bbce4" stroke="#3a5a8a" strokeWidth="0.500" />
        <rect x={1639} y={1654} width={10} height={8.500} fill="#9bbce4" stroke="#3a5a8a" strokeWidth="0.500" />
        <rect x={1626} y={1665.500} width={10} height={8.500} fill="#9bbce4" stroke="#3a5a8a" strokeWidth="0.500" />
        <rect x={1639} y={1665.500} width={10} height={8.500} fill="#9bbce4" stroke="#3a5a8a" strokeWidth="0.500" />
      </Ico>
      <NArrow x={1656} w={22} />
    </div>
  );
}

function Timeline() {
  return (
    <div className="flex flex-col h-[100px] bg-[#f1f1f1] shrink-0">
      <div className="h-[4px] bg-[#cccccc]" />
      <div className="flex h-[2px]"><div className="w-[270px] bg-[#cccccc]" /><div className="flex-1 bg-[#e3e3e3]" /></div>
      <div className="flex flex-1 items-start justify-between">
        <Ico x={0} y={1706} w={360} h={94}>
          <path d="M22 1742H26V1766H22ZM44 1742V1766L27 1754Z" fill={GR} />
          <path d="M70.500 1754L90 1742V1766ZM92 1750H96V1760H92Z" fill={GR} />
          <path d="M122 1738L146 1753L122 1768Z" fill={GR} />
          <path d="M170 1750H174V1760H170ZM176 1742L195.500 1754L176 1766Z" fill={GR} />
          <path d="M222 1742L240 1754L222 1766ZM240 1742H244V1766H240Z" fill={GR} />
          <rect x={293} y={1737} width={27} height={28} fill="none" stroke="#999" strokeWidth="1.500" />
          <path d="M300 1746H310M301 1748V1760M311 1748C311 1754 306 1758 301 1760" fill="none" stroke="#777" strokeWidth="1.200" />
          <path d="M307 1764L316 1752L322 1757L313 1769Z" fill="#f6b84b" stroke="#c98a20" strokeWidth="0.500" />
          <circle cx={320} cy={1750} r={3} fill="#ee2222" />
          <path d="M307 1764L313 1769L306 1771Z" fill="#555" />
          {[[293, 1737], [320, 1737], [293, 1765], [300, 1746], [311, 1746], [300, 1760]].map(([x, y]) => (
            <rect key={`${x}${y}`} x={x - 1.500} y={y - 1.500} width={3} height={3} fill={BLUE} />
          ))}
          <path d="M320 1724H344V1731L332.500 1742L320 1731Z" fill={GR} />
          <rect x={330} y={1738} width={4} height={50} fill={GR} />
          <rect x={308} y={1774} width={4} height={14} fill="#cccccc" />
        </Ico>
        <FaCog size={30} color="#6b6b6b" className="mt-[31px] mr-[28px]" />
      </div>
    </div>
  );
}

export default function App() {
  return (
    <div className="flex flex-col w-[2880px] h-[1800px] overflow-hidden bg-white font-['Open_Sans',sans-serif]">
      <TopBar />
      <Ribbon />
      <div className="relative flex-1 bg-white overflow-hidden">
        <Drawing />
        <BrowserPanel />
        <ViewCube />
        <Palette />
        <Comments />
        <NavBar />
      </div>
      <Timeline />
    </div>
  );
}
